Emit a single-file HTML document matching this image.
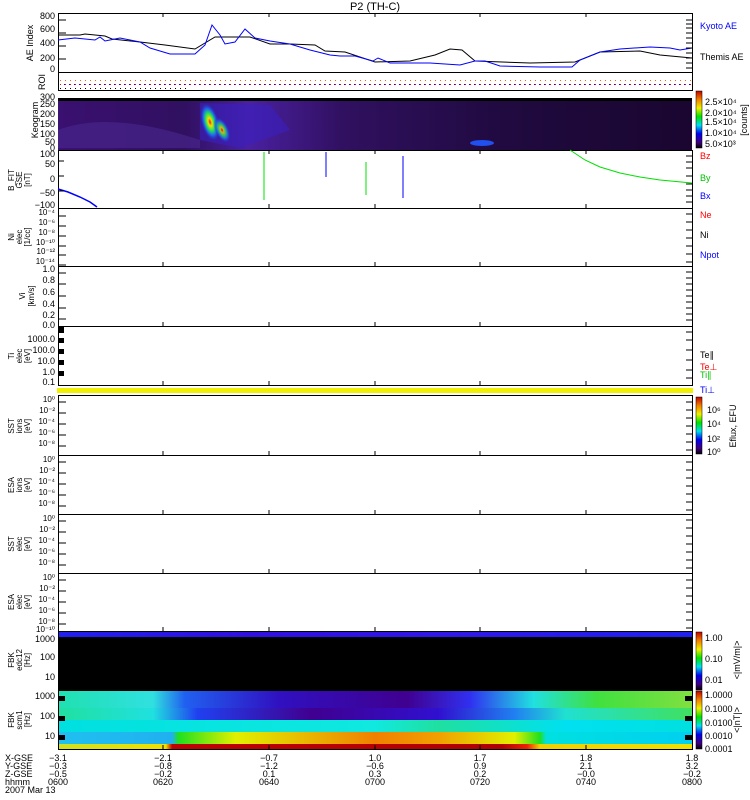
<!DOCTYPE html>
<html><head><meta charset="utf-8"><style>
html,body{margin:0;padding:0;background:#fff;}
svg{display:block;font-family:"Liberation Sans",sans-serif;}
</style></head><body>
<svg width="750" height="800" viewBox="0 0 750 800" xmlns="http://www.w3.org/2000/svg">
<defs>
<linearGradient id="kg" x1="0" x2="1" y1="0" y2="0">
<stop offset="0" stop-color="#3a1070"/><stop offset="0.2" stop-color="#301060"/><stop offset="0.3" stop-color="#4a20a0"/><stop offset="0.45" stop-color="#301060"/><stop offset="0.7" stop-color="#200a40"/><stop offset="1" stop-color="#1a0630"/></linearGradient>
<radialGradient id="hot" cx="0.5" cy="0.5" r="0.5"><stop offset="0" stop-color="#e02000"/><stop offset="0.2" stop-color="#f0e000"/><stop offset="0.45" stop-color="#20e060"/><stop offset="0.7" stop-color="#2060f0"/><stop offset="1" stop-color="#3020a0" stop-opacity="0"/></radialGradient>
<linearGradient id="cb" x1="0" x2="0" y1="1" y2="0"><stop offset="0" stop-color="#000"/><stop offset="0.1" stop-color="#400080"/><stop offset="0.25" stop-color="#0000f0"/><stop offset="0.4" stop-color="#00e0f0"/><stop offset="0.55" stop-color="#00e000"/><stop offset="0.7" stop-color="#f0f000"/><stop offset="0.85" stop-color="#f08000"/><stop offset="1" stop-color="#c00000"/></linearGradient>
<linearGradient id="b1" x1="0" x2="1"><stop offset="0" stop-color="#20e0b0"/><stop offset="0.15" stop-color="#30e0e0"/><stop offset="0.2" stop-color="#2060f0"/><stop offset="0.35" stop-color="#3010c0"/><stop offset="0.55" stop-color="#400090"/><stop offset="0.65" stop-color="#3030f0"/><stop offset="0.75" stop-color="#20e0e0"/><stop offset="0.85" stop-color="#40e040"/><stop offset="1" stop-color="#80e040"/></linearGradient>
<linearGradient id="b2" x1="0" x2="1"><stop offset="0" stop-color="#20e0a0"/><stop offset="0.15" stop-color="#20e0e0"/><stop offset="0.22" stop-color="#2040f0"/><stop offset="0.4" stop-color="#400090"/><stop offset="0.6" stop-color="#3010d0"/><stop offset="0.72" stop-color="#2080f0"/><stop offset="0.8" stop-color="#20e0d0"/><stop offset="1" stop-color="#40e060"/></linearGradient>
<linearGradient id="b3" x1="0" x2="1"><stop offset="0" stop-color="#00e0e0"/><stop offset="0.5" stop-color="#10e8e0"/><stop offset="0.6" stop-color="#20e0a0"/><stop offset="0.8" stop-color="#00e0f0"/><stop offset="1" stop-color="#00e0e0"/></linearGradient>
<linearGradient id="b4" x1="0" x2="1"><stop offset="0" stop-color="#20c0f0"/><stop offset="0.18" stop-color="#20b0f0"/><stop offset="0.19" stop-color="#20e020"/><stop offset="0.28" stop-color="#e0f000"/><stop offset="0.5" stop-color="#f08000"/><stop offset="0.6" stop-color="#f0a000"/><stop offset="0.72" stop-color="#e0f000"/><stop offset="0.76" stop-color="#20e020"/><stop offset="0.77" stop-color="#00e0e0"/><stop offset="1" stop-color="#00d0f0"/></linearGradient>
<linearGradient id="b5" x1="0" x2="1"><stop offset="0" stop-color="#d0e020"/><stop offset="0.17" stop-color="#f0e000"/><stop offset="0.18" stop-color="#c00000"/><stop offset="0.7" stop-color="#b00000"/><stop offset="0.74" stop-color="#f02000"/><stop offset="0.76" stop-color="#f0d000"/><stop offset="1" stop-color="#f0e000"/></linearGradient>
<linearGradient id="fb" x1="0" x2="1"><stop offset="0" stop-color="#2020f0"/><stop offset="0.3" stop-color="#3010e0"/><stop offset="0.6" stop-color="#3018e8"/><stop offset="1" stop-color="#2020f0"/></linearGradient>
</defs>

<text x="375" y="10" font-size="11" text-anchor="middle">P2 (TH-C)</text>

<g fill="none" stroke="#000" stroke-width="1">
<rect x="58.5" y="13.5" width="634" height="59"/>
<rect x="58.5" y="72.5" width="634" height="18"/>
<rect x="58.5" y="150.5" width="634" height="58"/>
<rect x="58.5" y="208.5" width="634" height="58"/>
<rect x="58.5" y="266.5" width="634" height="60"/>
<rect x="58.5" y="326.5" width="634" height="59"/>
<rect x="58.5" y="395.5" width="634" height="60"/>
<rect x="58.5" y="455.5" width="634" height="59"/>
<rect x="58.5" y="514.5" width="634" height="59"/>
<rect x="58.5" y="573.5" width="634" height="58"/>
</g>

<polyline fill="none" stroke="#000" stroke-width="1" points="58,35 80,35 85,34 105,36 112,39 140,42 165,45 195,49 215,37 250,37 270,44 290,44 315,45 325,51 345,52 375,62 410,61 435,55 450,49 462,50 475,61 530,63 575,62 600,52 640,51 660,55 692,58"/>
<polyline fill="none" stroke="#0000ff" stroke-width="1" points="58,40 75,38 95,40 100,37 105,41 120,38 140,42 150,48 170,54 195,54 205,45 212,25 220,35 225,44 235,42 245,29 255,38 270,41 290,44 310,50 330,55 340,56 355,56 373,61 378,58 390,63 430,63 460,65 475,61 485,61 500,66 540,67 572,67 580,60 600,52 620,49 650,47 670,48 680,50 692,48"/>
<g font-size="9" text-anchor="end"><text x="55" y="19">800</text><text x="55" y="32">600</text><text x="55" y="46">400</text><text x="55" y="61">200</text><text x="55" y="72">0</text></g>
<text transform="translate(33,43) rotate(-90)" font-size="9" text-anchor="middle">AE Index</text>
<text x="700" y="29" font-size="9" fill="#0000ff">Kyoto AE</text>
<text x="700" y="60" font-size="9">Themis AE</text>

<line x1="60" x2="692" y1="80.5" y2="80.5" stroke="#ff6000" stroke-dasharray="1,4"/>
<line x1="60" x2="692" y1="84.5" y2="84.5" stroke="#ff0000" stroke-dasharray="1,4"/>
<line x1="61" x2="692" y1="84.5" y2="84.5" stroke="#0000ff" stroke-dasharray="1,4" stroke-dashoffset="2"/>
<line x1="60" x2="190" y1="88.5" y2="88.5" stroke="#000" stroke-dasharray="1,4"/>
<text transform="translate(45,82) rotate(-90)" font-size="9" text-anchor="middle">ROI</text>

<rect x="58" y="98" width="634" height="3" fill="#000"/>
<rect x="58" y="101" width="634" height="49" fill="url(#kg)"/>
<path d="M58,130 Q110,110 200,140 L200,148 L58,148Z" fill="#4a2890" opacity="0.6"/>
<path d="M200,103 L270,105 L290,130 L240,148 L200,140Z" fill="#3a20c0" opacity="0.6"/>
<ellipse cx="210" cy="122" rx="9" ry="20" fill="url(#hot)" transform="rotate(-15 210 122)"/>
<ellipse cx="222" cy="130" rx="7" ry="14" fill="url(#hot)" opacity="0.8" transform="rotate(-25 222 130)"/>
<ellipse cx="482" cy="143" rx="12" ry="3" fill="#2050f0"/>
<g font-size="9" text-anchor="end"><text x="55" y="100">300</text><text x="55" y="107">250</text><text x="55" y="117">200</text><text x="55" y="127">150</text><text x="55" y="137">100</text><text x="55" y="145">50</text><text x="55" y="151">0</text></g>
<text transform="translate(38,120) rotate(-90)" font-size="9" text-anchor="middle">Keogram</text>
<rect x="696" y="91" width="6" height="57" fill="url(#cb)" stroke="#000" stroke-width="0.5"/>
<g font-size="9"><text x="705" y="105">2.5×10⁴</text><text x="705" y="116">2.0×10⁴</text><text x="705" y="125">1.5×10⁴</text><text x="705" y="136">1.0×10⁴</text><text x="705" y="147">5.0×10³</text></g>
<text transform="translate(747,120) rotate(-90)" font-size="9" text-anchor="middle">[counts]</text>

<line x1="264" x2="264" y1="152" y2="200" stroke="#00e000"/>
<line x1="326" x2="326" y1="152" y2="177" stroke="#0000ff"/>
<line x1="366" x2="366" y1="162" y2="195" stroke="#00e000"/>
<line x1="403" x2="403" y1="156" y2="198" stroke="#0000ff"/>
<polyline fill="none" stroke="#0000ff" stroke-width="1.5" points="58,189 68,192 80,197 90,202 97,207"/>
<polyline fill="none" stroke="#00e000" points="570,150 585,160 600,167 620,173 640,177 660,180 692,183"/>
<g font-size="9" text-anchor="end"><text x="55" y="157">100</text><text x="55" y="167">50</text><text x="55" y="182">0</text><text x="55" y="196">−50</text><text x="55" y="208">−100</text></g>
<text transform="translate(14,180) rotate(-90)" font-size="8" text-anchor="middle">B_FIT</text>
<text transform="translate(22,180) rotate(-90)" font-size="8" text-anchor="middle">GSE</text>
<text transform="translate(30,180) rotate(-90)" font-size="8" text-anchor="middle">[nT]</text>
<text x="700" y="159" font-size="9" fill="#ff0000">Bz</text>
<text x="700" y="181" font-size="9" fill="#00c000">By</text>
<text x="700" y="199" font-size="9" fill="#0000ff">Bx</text>

<g font-size="8" text-anchor="end"><text x="55" y="215">10⁻⁴</text><text x="55" y="225">10⁻⁶</text><text x="55" y="235">10⁻⁸</text><text x="55" y="245">10⁻¹⁰</text><text x="55" y="254">10⁻¹²</text><text x="55" y="264">10⁻¹⁴</text></g>
<text transform="translate(14,237) rotate(-90)" font-size="8" text-anchor="middle">Ni</text>
<text transform="translate(22,237) rotate(-90)" font-size="8" text-anchor="middle">elec</text>
<text transform="translate(30,237) rotate(-90)" font-size="8" text-anchor="middle">[1/cc]</text>
<text x="700" y="218" font-size="9" fill="#ff0000">Ne</text>
<text x="700" y="238" font-size="9">Ni</text>
<text x="700" y="258" font-size="9" fill="#0000ff">Npot</text>

<g font-size="9" text-anchor="end"><text x="55" y="272">1.0</text><text x="55" y="283">0.8</text><text x="55" y="295">0.6</text><text x="55" y="307">0.4</text><text x="55" y="318">0.2</text><text x="55" y="328">0.0</text></g>
<text transform="translate(25,296) rotate(-90)" font-size="8" text-anchor="middle">Vi</text>
<text transform="translate(34,296) rotate(-90)" font-size="8" text-anchor="middle">[km/s]</text>

<g fill="#000"><rect x="58" y="327" width="6" height="6"/><rect x="58" y="338" width="6" height="5"/><rect x="58" y="349" width="6" height="5"/><rect x="58" y="360" width="6" height="5"/><rect x="58" y="371" width="6" height="5"/></g>
<g font-size="9" text-anchor="end"><text x="55" y="342">1000.0</text><text x="55" y="353">100.0</text><text x="55" y="364">10.0</text><text x="55" y="375">1.0</text><text x="55" y="385">0.1</text></g>
<text transform="translate(14,356) rotate(-90)" font-size="8" text-anchor="middle">Ti</text>
<text transform="translate(22,356) rotate(-90)" font-size="8" text-anchor="middle">elec</text>
<text transform="translate(30,356) rotate(-90)" font-size="8" text-anchor="middle">[eV]</text>
<text x="700" y="358" font-size="9">Te∥</text>
<text x="700" y="370" font-size="9" fill="#ff0000">Te⊥</text>
<text x="700" y="378" font-size="9" fill="#00c000">Ti∥</text>
<text x="700" y="393" font-size="9" fill="#0000ff">Ti⊥</text>
<rect x="57" y="388" width="636" height="5" fill="#f0f000"/>

<g font-size="8" text-anchor="end">
<text x="55" y="402">10⁰</text><text x="55" y="413">10⁻²</text><text x="55" y="424">10⁻⁴</text><text x="55" y="435">10⁻⁶</text><text x="55" y="446">10⁻⁸</text>
<text x="55" y="462">10⁰</text><text x="55" y="473">10⁻²</text><text x="55" y="484">10⁻⁴</text><text x="55" y="495">10⁻⁶</text><text x="55" y="506">10⁻⁸</text>
<text x="55" y="521">10⁰</text><text x="55" y="532">10⁻²</text><text x="55" y="543">10⁻⁴</text><text x="55" y="554">10⁻⁶</text><text x="55" y="565">10⁻⁸</text>
<text x="55" y="580">10⁰</text><text x="55" y="591">10⁻²</text><text x="55" y="602">10⁻⁴</text><text x="55" y="613">10⁻⁶</text><text x="55" y="624">10⁻⁸</text><text x="55" y="632">10⁻¹⁰</text>
</g>
<g font-size="8" text-anchor="middle">
<text transform="translate(14,426) rotate(-90)">SST</text><text transform="translate(22,426) rotate(-90)">ions</text><text transform="translate(30,426) rotate(-90)">[eV]</text>
<text transform="translate(14,485) rotate(-90)">ESA</text><text transform="translate(22,485) rotate(-90)">ions</text><text transform="translate(30,485) rotate(-90)">[eV]</text>
<text transform="translate(14,544) rotate(-90)">SST</text><text transform="translate(22,544) rotate(-90)">elec</text><text transform="translate(30,544) rotate(-90)">[eV]</text>
<text transform="translate(14,602) rotate(-90)">ESA</text><text transform="translate(22,602) rotate(-90)">elec</text><text transform="translate(30,602) rotate(-90)">[eV]</text>
</g>
<rect x="696" y="397" width="6" height="57" fill="url(#cb)" stroke="#000" stroke-width="0.5"/>
<g font-size="9"><text x="707" y="413">10⁶</text><text x="707" y="427">10⁴</text><text x="707" y="442">10²</text><text x="707" y="455">10⁰</text></g>
<text transform="translate(736,426) rotate(-90)" font-size="9" text-anchor="middle">Eflux, EFU</text>

<rect x="58" y="631" width="634" height="6" fill="url(#fb)"/>
<rect x="58" y="637" width="634" height="54" fill="#000"/>
<g font-size="9" text-anchor="end"><text x="55" y="642">1000</text><text x="55" y="660">100</text><text x="55" y="680">10</text></g>
<g font-size="8" text-anchor="middle"><text transform="translate(14,660) rotate(-90)">FBK</text><text transform="translate(22,660) rotate(-90)">edc12</text><text transform="translate(30,660) rotate(-90)">[Hz]</text></g>
<rect x="696" y="632" width="6" height="58" fill="url(#cb)" stroke="#000" stroke-width="0.5"/>
<g font-size="9"><text x="705" y="641">1.00</text><text x="705" y="662">0.10</text><text x="705" y="683">0.01</text></g>
<text transform="translate(740,660) rotate(-90)" font-size="9" text-anchor="middle">&lt;|mV/m|&gt;</text>

<rect x="58" y="691" width="634" height="5" fill="url(#b1)"/>
<rect x="58" y="696" width="634" height="12" fill="url(#b1)"/>
<rect x="58" y="708" width="634" height="12" fill="url(#b2)"/>
<rect x="58" y="720" width="634" height="12" fill="url(#b3)"/>
<rect x="58" y="732" width="634" height="12" fill="url(#b4)"/>
<rect x="58" y="744" width="634" height="5" fill="url(#b5)"/>
<g fill="#000"><rect x="58" y="696" width="7" height="5"/><rect x="58" y="716" width="7" height="5"/><rect x="58" y="735" width="7" height="5"/><rect x="685" y="696" width="7" height="5"/><rect x="685" y="716" width="7" height="5"/><rect x="685" y="735" width="7" height="5"/></g>
<g font-size="9" text-anchor="end"><text x="55" y="699">1000</text><text x="55" y="719">100</text><text x="55" y="739">10</text></g>
<g font-size="8" text-anchor="middle"><text transform="translate(14,720) rotate(-90)">FBK</text><text transform="translate(22,720) rotate(-90)">scm1</text><text transform="translate(30,720) rotate(-90)">[Hz]</text></g>
<rect x="696" y="691" width="6" height="58" fill="url(#cb)" stroke="#000" stroke-width="0.5"/>
<g font-size="9"><text x="705" y="698">1.0000</text><text x="705" y="712">0.1000</text><text x="705" y="726">0.0100</text><text x="705" y="739">0.0010</text><text x="705" y="752">0.0001</text></g>
<text transform="translate(740,720) rotate(-90)" font-size="9" text-anchor="middle">&lt;|nT|&gt;</text>
<rect x="58.5" y="631.5" width="634" height="118" fill="none" stroke="#000"/>

<g stroke="#000">
<path d="M163,13v4M269,13v4M375,13v4M480,13v4M586,13v4M163,150v4M269,150v4M375,150v4M480,150v4M586,150v4M163,204v4M269,204v4M375,204v4M480,204v4M586,204v4M163,262v4M269,262v4M375,262v4M480,262v4M586,262v4M163,322v4M269,322v4M375,322v4M480,322v4M586,322v4M163,381v4M269,381v4M375,381v4M480,381v4M586,381v4M163,451v4M269,451v4M375,451v4M480,451v4M586,451v4M163,510v4M269,510v4M375,510v4M480,510v4M586,510v4M163,569v4M269,569v4M375,569v4M480,569v4M586,569v4M163,627v4M269,627v4M375,627v4M480,627v4M586,627v4M163,745v4M269,745v4M375,745v4M480,745v4M586,745v4"/>
<path d="M686,20h6M686,24h6M686,28h6M686,33h6M686,38h6M686,43h6M686,48h6M686,53h6M686,58h6M686,63h6M686,68h6M686,156h6M686,162h6M686,168h6M686,176h6M686,184h6M686,190h6M686,196h6M686,202h6M686,214h6M686,222h6M686,230h6M686,238h6M686,246h6M686,254h6M686,262h6M686,272h6M686,278h6M686,284h6M686,290h6M686,296h6M686,302h6M686,308h6M686,314h6M686,320h6M686,332h6M686,340h6M686,350h6M686,360h6M686,370h6M686,378h6M686,402h6M686,410h6M686,418h6M686,426h6M686,434h6M686,442h6M686,450h6M686,462h6M686,470h6M686,478h6M686,486h6M686,494h6M686,502h6M686,510h6M686,520h6M686,528h6M686,536h6M686,544h6M686,552h6M686,560h6M686,568h6M686,580h6M686,588h6M686,596h6M686,604h6M686,612h6M686,620h6M686,628h6"/>
<path d="M58,20h8M58,33h8M58,46h8M58,59h8M58,216h8M58,226h8M58,236h8M58,246h8M58,255h8M58,265h8M58,273h8M58,284h8M58,296h8M58,308h8M58,319h8M58,402h8M58,413h8M58,424h8M58,435h8M58,446h8M58,462h8M58,473h8M58,484h8M58,495h8M58,506h8M58,521h8M58,532h8M58,543h8M58,554h8M58,565h8M58,580h8M58,591h8M58,602h8M58,613h8M58,624h8M58,161h6M58,176h6M58,191h6"/>
</g>

<g font-size="9">
<text x="5" y="761">X-GSE</text><text x="5" y="769">Y-GSE</text><text x="5" y="777">Z-GSE</text><text x="5" y="785">hhmm</text><text x="5" y="793">2007 Mar 13</text>
</g>
<g font-size="9" text-anchor="middle">
<text x="58" y="761">−3.1</text><text x="58" y="769">−0.3</text><text x="58" y="777">−0.5</text><text x="58" y="785">0600</text>
<text x="163" y="761">−2.1</text><text x="163" y="769">−0.8</text><text x="163" y="777">−0.2</text><text x="163" y="785">0620</text>
<text x="269" y="761">−0.7</text><text x="269" y="769">−1.2</text><text x="269" y="777">0.1</text><text x="269" y="785">0640</text>
<text x="375" y="761">1.0</text><text x="375" y="769">−0.6</text><text x="375" y="777">0.3</text><text x="375" y="785">0700</text>
<text x="480" y="761">1.7</text><text x="480" y="769">0.9</text><text x="480" y="777">0.2</text><text x="480" y="785">0720</text>
<text x="586" y="761">1.8</text><text x="586" y="769">2.1</text><text x="586" y="777">−0.0</text><text x="586" y="785">0740</text>
<text x="692" y="761">1.8</text><text x="692" y="769">3.2</text><text x="692" y="777">−0.2</text><text x="692" y="785">0800</text>
</g>
</svg>
</body></html>
